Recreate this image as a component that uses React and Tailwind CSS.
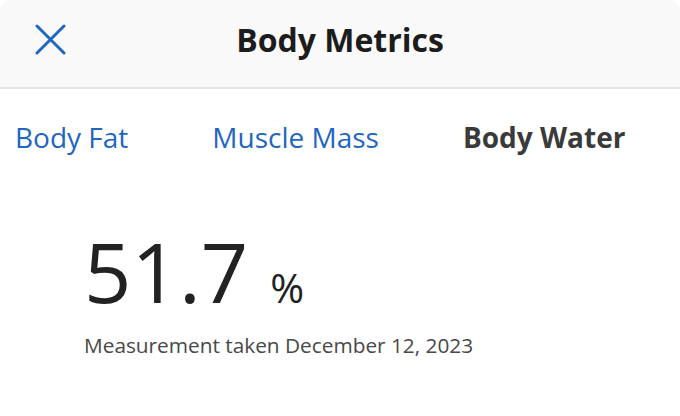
import React from 'react';

const tabs = [
  { label: 'Body Fat', active: false },
  { label: 'Muscle Mass', active: false },
  { label: 'Body Water', active: true },
];

function App() {
  return (
    <div className="w-[680px] h-[416px] bg-white overflow-hidden font-['Open_Sans',sans-serif] text-[#222]">
      <header className="grid grid-cols-[1fr_auto_1fr] h-[89px] bg-[#f9f9f9] border-b-2 border-[#e4e4e4] rounded-t-[10px]">
        <div className="pl-[35px] pt-[24px]">
          <svg width="31" height="31" viewBox="0 0 31 31" fill="none" stroke="#1f66c1" strokeWidth="3" strokeLinecap="round">
            <path d="M2 2L29 29M29 2L2 29" />
          </svg>
        </div>
        <h1 className="pt-[24px] text-[32px] leading-none font-bold text-[#1c1c1c]">Body Metrics</h1>
        <div />
      </header>

      <nav className="flex gap-[84px] pl-[15px] mt-[34px]">
        {tabs.map((t) => (
          <span
            key={t.label}
            className={`text-[28px] leading-none ${t.active ? 'font-bold text-[#3a3a3a]' : 'text-[#1f66c1]'}`}
          >
            {t.label}
          </span>
        ))}
      </nav>

      <main className="pl-[84px] mt-[78px]">
        <div className="flex items-baseline">
          <span className="text-[83px] leading-none text-[#222]">51.7</span>
          <span className="ml-[22px] text-[41px] leading-none text-[#222]">%</span>
        </div>
        <p className="mt-[23px] text-[20.8px] leading-none text-[#484848]">Measurement taken December 12, 2023</p>
      </main>
    </div>
  );
}

export default App;
